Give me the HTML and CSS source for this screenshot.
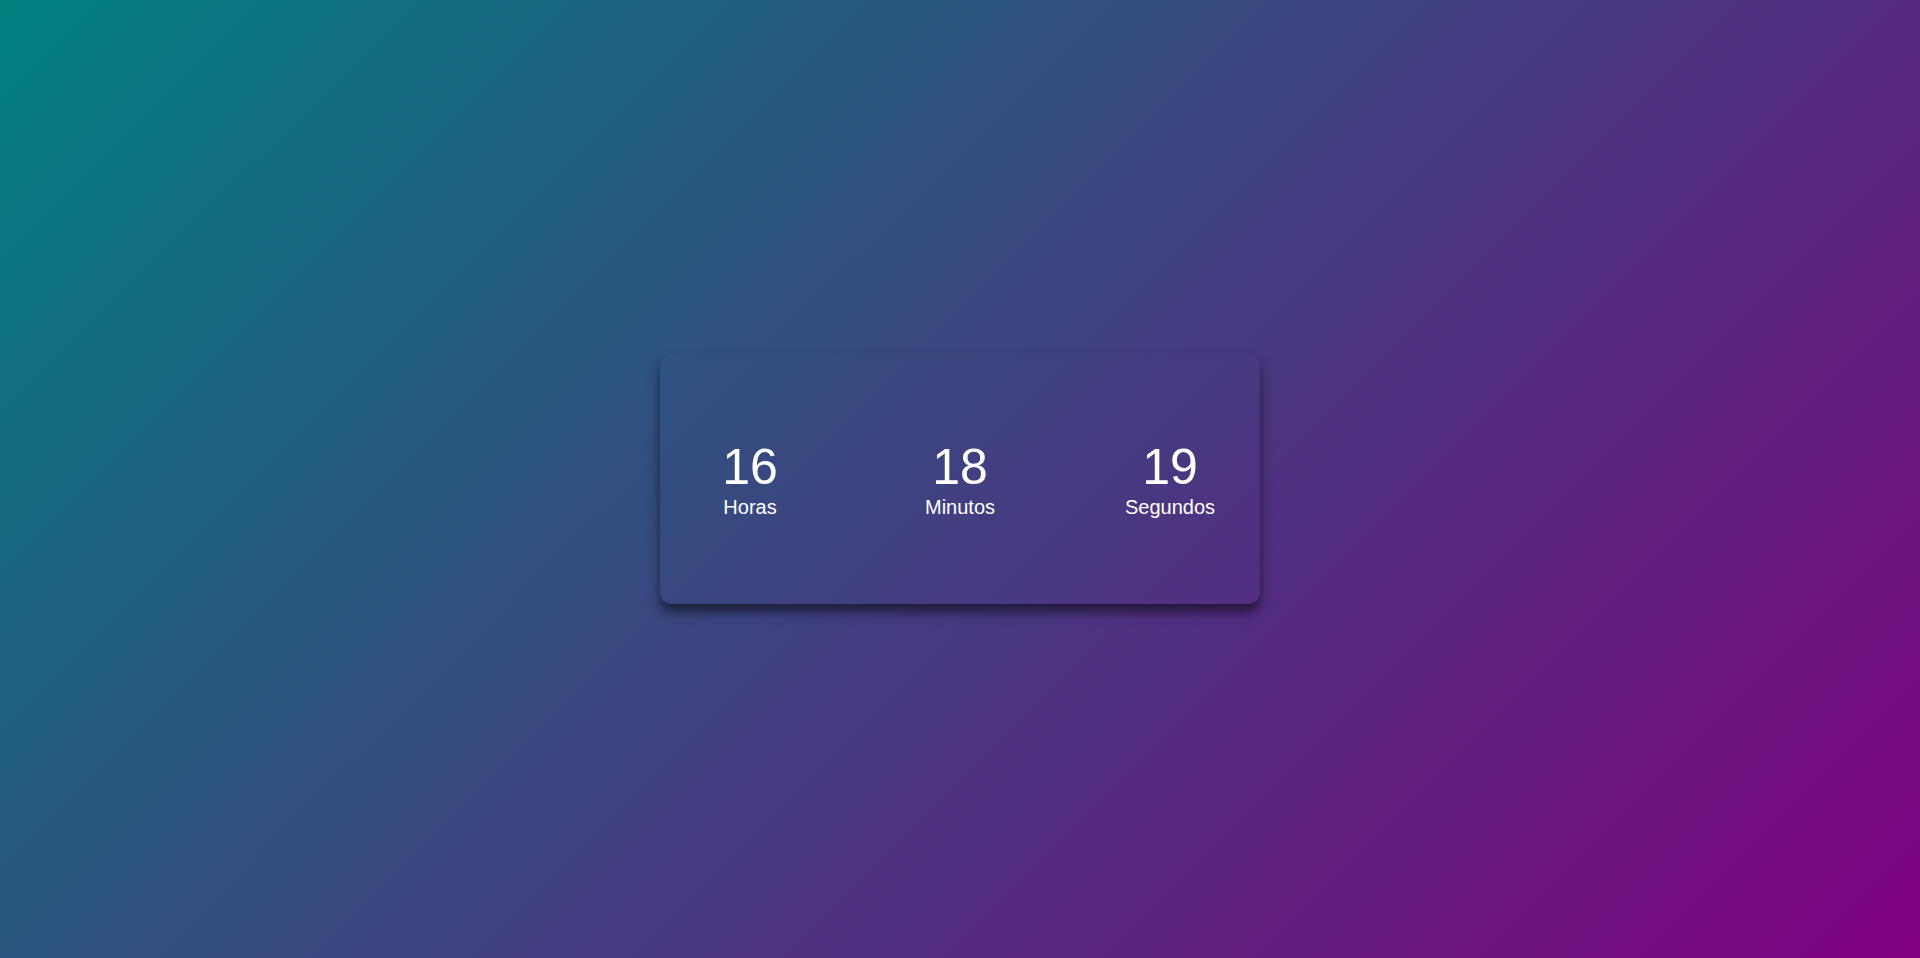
FILE: index.html
```html
<!DOCTYPE html>
<html lang="pt-BR">
<head>
<meta charset="utf-8">
<title>Relógio</title>
<link rel="stylesheet" href="styles.css">
</head>
<body>
<main class="clock">
<div class="unit"><span class="value">16</span><span class="label">Horas</span></div>
<div class="unit"><span class="value">18</span><span class="label">Minutos</span></div>
<div class="unit"><span class="value">19</span><span class="label">Segundos</span></div>
</main>
</body>
</html>
```
FILE: styles.css
```css
* {
  margin: 0;
  padding: 0;
  box-sizing: border-box;
}

body {
  min-height: 100vh;
  display: flex;
  align-items: center;
  justify-content: center;
  background: linear-gradient(135deg, teal, purple);
  font-family: Arial, "Liberation Sans", sans-serif;
  color: #fff;
}

.clock {
  display: flex;
  align-items: center;
  justify-content: center;
  gap: 120px;
  width: 600px;
  max-width: 100%;
  min-height: 250px;
  border-radius: 12px;
  box-shadow: 0 8px 12px rgba(0, 0, 0, 0.55);
}

.unit {
  display: flex;
  flex-direction: column;
  align-items: center;
  width: 90px;
}

.value {
  font-size: 50px;
  line-height: 56px;
}

.label {
  font-size: 20px;
  line-height: 24px;
}
```
